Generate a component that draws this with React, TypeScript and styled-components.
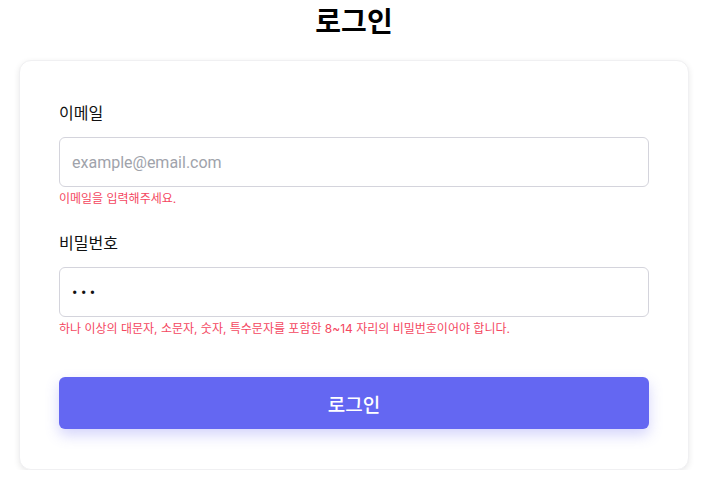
import React from "react";
import styled, { createGlobalStyle } from "styled-components";

const Global = createGlobalStyle`
  html, body { margin: 0; padding: 0; background: #ffffff; }
  body { font-family: Inter, "Noto Sans CJK KR", "Noto Sans", sans-serif; color: #111111; }
  * { box-sizing: border-box; }
`;

const Page = styled.div`
  width: 708px;
  padding: 0 19px;
  display: flex;
  flex-direction: column;
  gap: 16px;
`;

const Title = styled.h1`
  margin: 0;
  font-size: 28px;
  line-height: 44px;
  font-weight: 700;
  text-align: center;
  color: #000000;
`;

const Card = styled.form`
  background: #ffffff;
  border: 1px solid #f0f0f2;
  border-radius: 12px;
  box-shadow: 0 2px 6px rgba(0, 0, 0, 0.09);
  padding: 40px 39px;
  display: flex;
  flex-direction: column;
`;

const Field = styled.div`
  display: flex;
  flex-direction: column;
  & + & { margin-top: 23px; }
`;

const Label = styled.label`
  font-size: 16px;
  line-height: 24px;
  color: #111111;
  margin-bottom: 12px;
`;

const Input = styled.input<{ $secret?: boolean }>`
  height: 50px;
  width: 100%;
  border: 1px solid #d4d4dc;
  border-radius: 6px;
  padding: 0 12px;
  font-family: Roboto, "Noto Sans CJK KR", sans-serif;
  font-size: 16px;
  letter-spacing: ${(p) => (p.$secret ? "3.5px" : "normal")};
  color: #111111;
  outline: none;
  &::placeholder { color: #a0a3ab; }
`;

const ErrorText = styled.p`
  margin: 3px 0 0;
  font-size: 12px;
  line-height: 18px;
  color: #f4475f;
`;

const Button = styled.button`
  margin-top: 39px;
  height: 52px;
  width: 100%;
  border: none;
  border-radius: 6px;
  background: #6467f2;
  color: #ffffff;
  font-family: Inter, "Noto Sans CJK KR", sans-serif;
  font-size: 19px;
  font-weight: 500;
  box-shadow: 0 6px 14px rgba(99, 102, 241, 0.28);
  cursor: pointer;
`;

export default function App() {
  return (
    <>
      <Global />
      <Page>
        <Title>로그인</Title>
        <Card onSubmit={(e) => e.preventDefault()}>
          <Field>
            <Label htmlFor="email">이메일</Label>
            <Input id="email" type="email" placeholder="example@email.com" />
            <ErrorText>이메일을 입력해주세요.</ErrorText>
          </Field>
          <Field>
            <Label htmlFor="pw">비밀번호</Label>
            <Input id="pw" type="password" defaultValue="abc" $secret />
            <ErrorText>하나 이상의 대문자, 소문자, 숫자, 특수문자를 포함한 8~14 자리의 비밀번호이어야 합니다.</ErrorText>
          </Field>
          <Button type="submit">로그인</Button>
        </Card>
      </Page>
    </>
  );
}
